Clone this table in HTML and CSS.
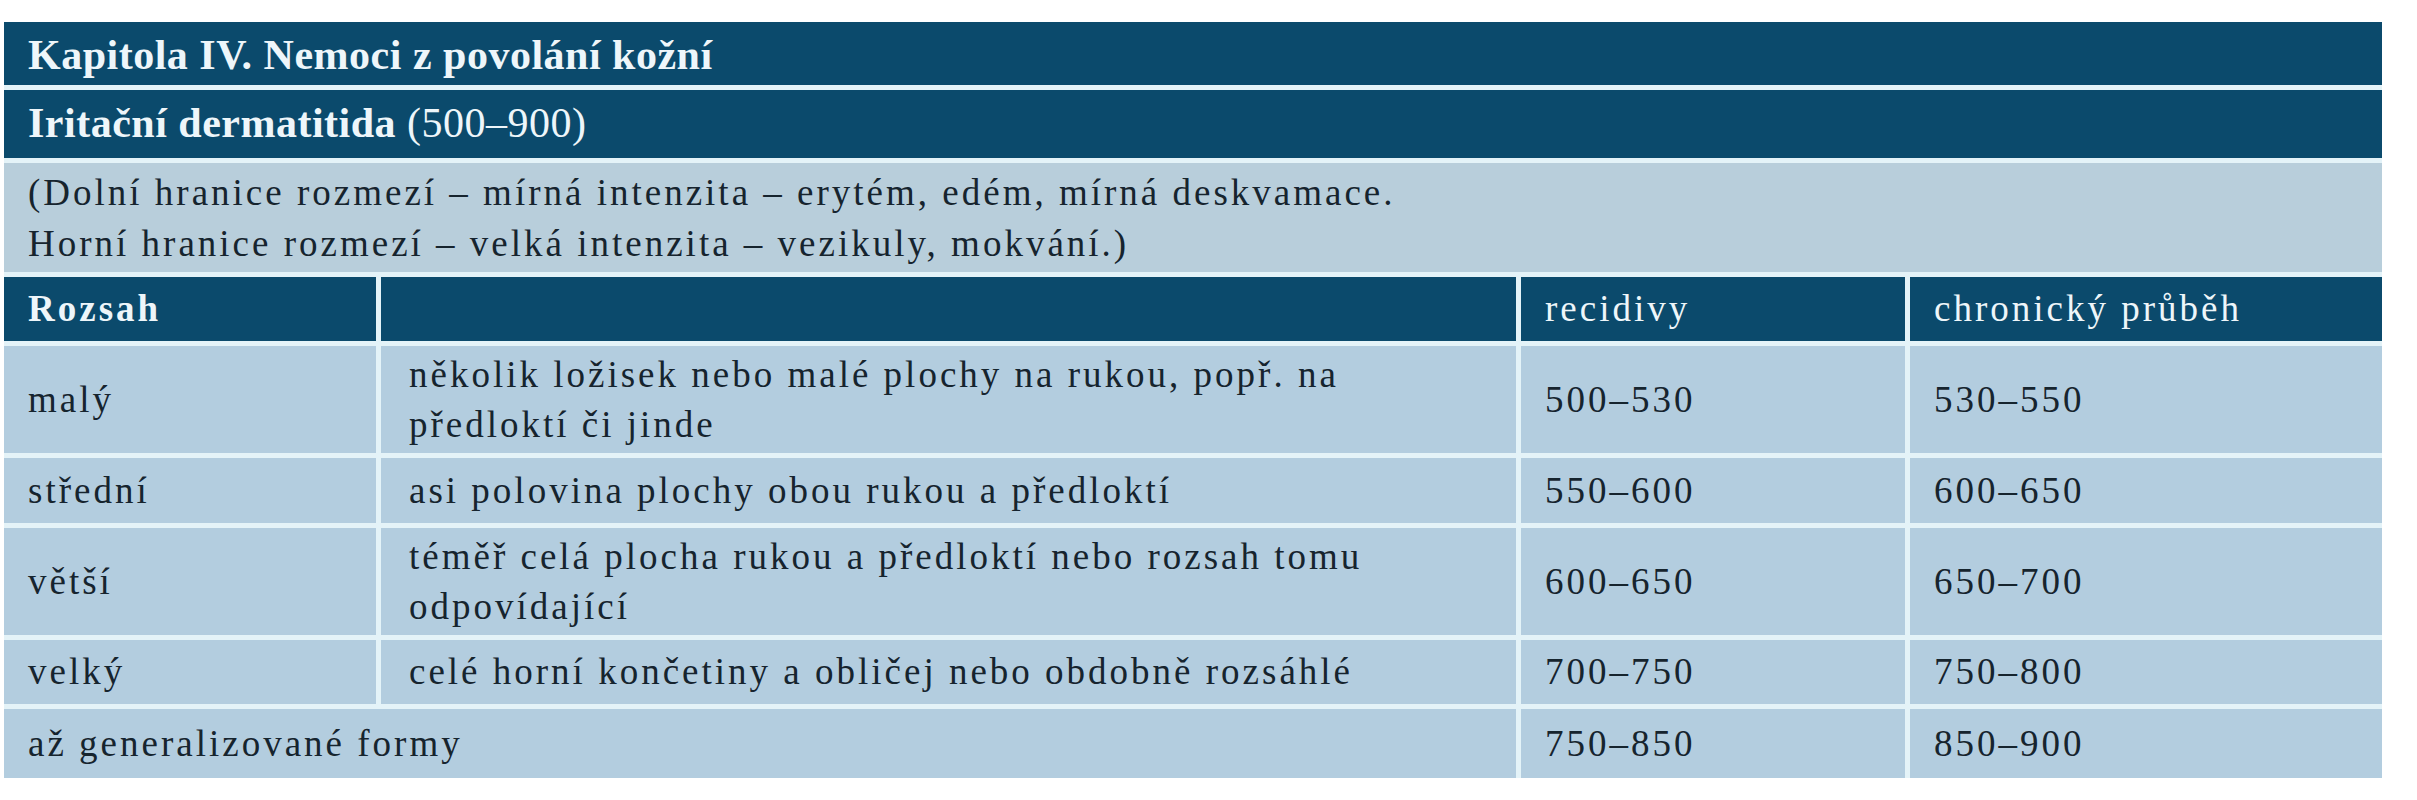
FILE: index.html
```html
<!DOCTYPE html>
<html lang="cs">
<head>
<meta charset="utf-8">
<title>Kapitola IV. Nemoci z povolání kožní</title>
<link rel="stylesheet" href="styles.css">
</head>
<body>
<div class="sheet">
  <div class="cell title span4">Kapitola IV. Nemoci z povolání kožní</div>
  <div class="cell title span4">Iritační dermatitida <span class="plain">(500–900)</span></div>
  <div class="cell note span4">(Dolní hranice rozmezí – mírná intenzita – erytém, edém, mírná deskvamace.<br>Horní hranice rozmezí – velká intenzita – vezikuly, mokvání.)</div>

  <div class="cell head strong">Rozsah</div>
  <div class="cell head desc"></div>
  <div class="cell head">recidivy</div>
  <div class="cell head">chronický průběh</div>

  <div class="cell">malý</div>
  <div class="cell desc">několik ložisek nebo malé plochy na rukou, popř. na<br>předloktí či jinde</div>
  <div class="cell">500–530</div>
  <div class="cell">530–550</div>

  <div class="cell">střední</div>
  <div class="cell desc">asi polovina plochy obou rukou a předloktí</div>
  <div class="cell">550–600</div>
  <div class="cell">600–650</div>

  <div class="cell">větší</div>
  <div class="cell desc">téměř celá plocha rukou a předloktí nebo rozsah tomu<br>odpovídající</div>
  <div class="cell">600–650</div>
  <div class="cell">650–700</div>

  <div class="cell">velký</div>
  <div class="cell desc">celé horní končetiny a obličej nebo obdobně rozsáhlé</div>
  <div class="cell">700–750</div>
  <div class="cell">750–800</div>

  <div class="cell span2">až generalizované formy</div>
  <div class="cell">750–850</div>
  <div class="cell">850–900</div>
</div>
</body>
</html>
```

FILE: styles.css
```css
html, body {
  margin: 0;
  padding: 0;
  background: #ffffff;
}

body {
  padding: 22px 0 0 4px;
  font-family: "Liberation Serif", "Times New Roman", serif;
  color: #16242e;
}

.sheet {
  width: 2378px;
  display: grid;
  grid-template-columns: 372px 1135px 384px 472px;
  grid-template-rows: 63px 68px 109px 64px 107px 65px 107px 64px 69px;
  column-gap: 5px;
  row-gap: 5px;
  background: #e4f3f8;
}

.cell {
  display: flex;
  flex-direction: column;
  justify-content: center;
  padding: 0 10px 0 24px;
  background: #b3cddf;
  font-size: 37px;
  letter-spacing: 3px;
  line-height: 50px;
  white-space: nowrap;
}

.cell.desc {
  padding-left: 28px;
}

.span4 {
  grid-column: 1 / 5;
}

.span2 {
  grid-column: 1 / 3;
}

.title {
  display: block;
  padding-top: 9px;
  background: #0b4a6c;
  color: #eef6fa;
  font-size: 42px;
  font-weight: 700;
  letter-spacing: 0.5px;
  line-height: 48px;
}

.title .plain {
  font-weight: 400;
}

.note {
  background: #b8cedb;
  line-height: 51px;
}

.head {
  background: #0b4a6c;
  color: #eef6fa;
}

.head.strong {
  font-weight: 700;
}
```
